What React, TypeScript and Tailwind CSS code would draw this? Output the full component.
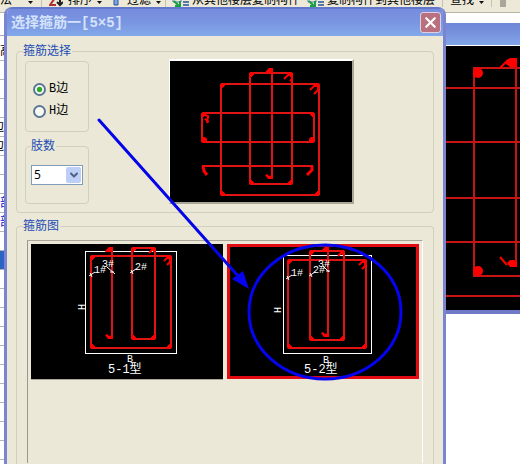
import { useState } from 'react';
import type { ReactNode } from 'react';
import { ChevronDown, X } from 'lucide-react';

interface GroupProps {
  title: string;
  className?: string;
  children: ReactNode;
}

interface BarLoop {
  x: number;
  y: number;
  w: number;
  h: number;
}

interface CardSpec {
  name: string;
  frame: BarLoop;
  outer: BarLoop;
  inner: BarLoop;
  tie: { x: number; y1: number; y2: number };
  marks: { text: string; x: number; y: number }[];
  leaders: string;
  side: { x: number; y: number };
  bottom: { x: number; y: number };
}

const cards: CardSpec[] = [
  {
    name: '5-1型',
    frame: { x: 54, y: 7, w: 91, h: 102 },
    outer: { x: 60, y: 12, w: 80, h: 92 },
    inner: { x: 101, y: 4, w: 23, h: 91 },
    tie: { x: 81, y1: 4, y2: 94 },
    marks: [
      { text: '1#', x: 63, y: 29 },
      { text: '3#', x: 71, y: 23 },
      { text: '2#', x: 104, y: 26 },
    ],
    leaders: 'M58 32l6-4M59 29l2 4M76 23l8 7M79 28h4M99 29l6-4M100 26l2 4',
    side: { x: 54, y: 63 },
    bottom: { x: 99, y: 118 },
  },
  {
    name: '5-2型',
    frame: { x: 56, y: 11, w: 88, h: 98 },
    outer: { x: 61, y: 16, w: 78, h: 88 },
    inner: { x: 83, y: 7, w: 34, h: 89 },
    tie: { x: 101, y1: 4, y2: 92 },
    marks: [
      { text: '1#', x: 64, y: 32 },
      { text: '2#', x: 86, y: 29 },
      { text: '3#', x: 91, y: 23 },
    ],
    leaders: 'M59 35l6-4M60 32l2 4M82 32l6-4M83 29l2 4M96 22l6 6M99 27h4',
    side: { x: 54, y: 66 },
    bottom: { x: 99, y: 119 },
  },
];

const sheetRows = ['高', '', '', '', '边', '边', '', '', '部', '部', '', 'selected', '', '', '', '', '', '', '', '', '', ''];

function Group({ title, className = '', children }: GroupProps) {
  return (
    <fieldset className={`min-w-0 border border-[#d0d0bc] ${className}`}>
      <legend className="pr-px text-[12px] leading-[14px] text-[#1c4cb4]">{title}</legend>
      {children}
    </fieldset>
  );
}

// Closed stirrup with thickened bends in its corners
function Stirrup({ x, y, w, h }: BarLoop) {
  const r = x + w;
  const b = y + h;
  return (
    <g>
      <rect x={x} y={y} width={w} height={h} rx={1} fill="none" stroke="#e01414" strokeWidth={2} />
      <path
        d={`M${x} ${y}h5l-5 5zM${r} ${y}v5l-5-5zM${x} ${b}v-5l5 5zM${r} ${b}h-5l5-5z`}
        fill="#ff0000"
        stroke="#ff0000"
      />
    </g>
  );
}

function TieBar({ x, y1, y2 }: { x: number; y1: number; y2: number }) {
  return (
    <g>
      <path d={`M${x} ${y1}V${y2}`} stroke="#e01414" strokeWidth={2} />
      <path
        d={`M${x + 1} ${y1 - 1}v5h-8l1-2l3-3zM${x + 1} ${y2 + 1}h-5l-3-4l2 -1l2 2l4-1z`}
        fill="#ff0000"
      />
    </g>
  );
}

function SectionPreview() {
  return (
    <svg viewBox="0 0 182 142" className="block h-[142px] w-full" fill="none" role="img" aria-label="箍筋">
      <Stirrup x={51} y={23} w={98} h={111} />
      <Stirrup x={80} y={12} w={42} h={111} />
      <rect x={32} y={52} width={112} height={29} rx={2} stroke="#e01414" strokeWidth={2} />
      <path
        d="M32 52h5l-5 5zM144 52v5l-5-5z"
        fill="#ff0000"
        stroke="#ff0000"
      />
      <circle cx={34} cy={79} r={3} fill="#ff0000" />
      <circle cx={142} cy={79} r={3} fill="#ff0000" />
      <TieBar x={102} y1={8} y2={117} />
      <path d="M32 105H143" stroke="#e01414" strokeWidth={2} />
      <path d="M33 105l1 5l3 4M142 105v4l-5 5" stroke="#ff0000" strokeWidth={3} />
      <path d="M140 29l4-4h4v4l-4 4M114 18l4-4h4v4l-2 2M35 58l4 3M35 54l3 1v2M38 55l-1 7" stroke="#ff0000" strokeWidth={2} />
    </svg>
  );
}

function StirrupCard({ card, selected, onSelect }: { card: CardSpec; selected: boolean; onSelect: () => void }) {
  const { outer, inner } = card;
  return (
    <button
      type="button"
      aria-pressed={selected}
      onClick={onSelect}
      className={`min-w-0 flex-1 bg-black ${
        selected ? 'ring-3 ring-inset ring-[#e30b12]' : 'shadow-[0_1px_0_#aaa799]'
      }`}
    >
      <svg viewBox="0 0 192 135" className="block h-[135px] w-full" fill="none">
        <rect x={card.frame.x + 0.5} y={card.frame.y + 0.5} width={card.frame.w} height={card.frame.h} stroke="#ffffff" />
        <Stirrup {...outer} />
        <Stirrup {...inner} />
        <TieBar {...card.tie} />
        <path
          d={`M${outer.x + outer.w - 7} ${outer.y + 5}l3-3h3v4l-3 3M${inner.x + inner.w - 6} ${inner.y + 5}l3-3h3`}
          stroke="#ff0000"
          strokeWidth={2}
        />
        <path d={card.leaders} stroke="#ffffff" />
        <g fill="#ffffff" className="font-['Liberation_Mono','Noto_Sans_CJK_SC',monospace]">
          {card.marks.map((mark) => (
            <text key={mark.text} x={mark.x} y={mark.y} fontSize={10}>
              {mark.text}
            </text>
          ))}
          <text transform={`translate(${card.side.x} ${card.side.y}) rotate(-90)`} fontSize={10} textAnchor="middle">
            H
          </text>
          <text x={card.bottom.x} y={card.bottom.y} fontSize={10} textAnchor="middle">
            B
          </text>
          <text x={77} y={129} fontSize={12}>
            {card.name}
          </text>
        </g>
      </svg>
    </button>
  );
}

function CopyIcon() {
  return (
    <svg viewBox="0 0 17 12" className="h-3 w-[17px] shrink-0" fill="none">
      <path d="M1 1h8v6H1zM9 4h3" stroke="#4a78b0" />
      <path d="M2 6l5 5M3 11h5V6" stroke="#18a040" strokeWidth={2} />
      <path d="M11 4h6M11 7h6M11 10h6" stroke="#5878a8" strokeWidth={2} />
    </svg>
  );
}

function Caret() {
  return (
    <svg viewBox="0 0 5 12" className="h-3 w-[5px] shrink-0">
      <path d="M0 6h5l-2.5 3z" fill="#111111" />
    </svg>
  );
}

function Toolbar() {
  return (
    <div className="flex h-[13px] items-end overflow-hidden border-b border-[#b8b5a4] bg-[#ece9d8] pb-[5px] text-[12px] leading-[14px] whitespace-nowrap text-black">
      <div className="flex w-[42px] shrink-0 items-end justify-between border-r border-[#c5c2b2] pr-2">
        <button type="button">法</button>
        <Caret />
      </div>
      <button type="button" className="ml-[7px] flex items-end gap-[5px]">
        <svg viewBox="0 0 14 12" className="h-3 w-[14px]" fill="none">
          <path d="M0 3h6L1 10h6" stroke="#b03030" strokeWidth={2} />
          <path d="M11 0v9M8 7l3 3l3-3" stroke="#222222" strokeWidth={2} />
        </svg>
        排序
        <Caret />
      </button>
      <button type="button" className="ml-[11px] flex items-end gap-[5px]">
        <svg viewBox="0 0 8 12" className="mr-px h-3 w-2">
          <path d="M1 0h4v10H1z" fill="#79a5e0" stroke="#31549c" />
        </svg>
        过滤
        <Caret />
      </button>
      <span className="ml-1 h-3 border-r border-[#c5c2b2]" />
      <button type="button" className="ml-[6px] flex items-end gap-[3px]">
        <CopyIcon />
        从其他楼层复制构件
      </button>
      <button type="button" className="ml-[7px] flex items-end gap-[3px]">
        <CopyIcon />
        复制构件到其他楼层
      </button>
      <span className="ml-[7px] h-3 border-r border-[#c5c2b2]" />
      <button type="button" className="ml-[7px] flex items-end gap-[5px]">
        查找
        <Caret />
      </button>
      <span className="ml-[7px] h-3 border-r border-[#c5c2b2]" />
      <span className="ml-[8px] h-2 w-[6px] shrink-0 bg-[#aaa79a]" />
    </div>
  );
}

function SheetStrip() {
  return (
    <div className="mt-[22px] w-4 border-t border-[#a8a8a8] pt-[6px]">
      {sheetRows.map((row, index) => (
        <div
          key={index}
          className={`flex h-[19px] w-4 items-center overflow-hidden border-b border-[#b4b4b4] text-[12px] ${
            row === 'selected' ? 'bg-[#2b62c4]' : ''
          } ${row === '部' ? 'text-[#1010d0]' : 'text-black'}`}
        >
          <span className={row === '边' ? '-ml-2' : ''}>{row === 'selected' ? '' : row}</span>
        </div>
      ))}
    </div>
  );
}

function SectionWindow() {
  return (
    <section className="absolute top-[23px] right-0 left-[240px] border-b-4 border-[#7079c8] bg-black">
      <div className="h-[23px] border-b border-white bg-linear-to-b from-[#6f87d8] via-[#7893de] to-[#82a7e8]" />
      <svg viewBox="0 0 74 264" className="ml-auto block h-[264px] w-[74px]" fill="none">
        <path
          d="M0 42H74M0 96H74M0 152H74M0 196H74M0 250H74M74 22H28V230H74M70 15V221"
          stroke="#c81414"
          strokeWidth={2}
        />
        <path d="M54 22l8-8M54 211l7 8" stroke="#ff0000" strokeWidth={2} />
        <path d="M61 14l3-2h7v9h-7l-4-3zM61 217l3-3h4l3 2v5h-7z" fill="#ff0000" />
        <circle cx={32} cy={27} r={5} fill="#ff0000" />
        <circle cx={32} cy={225} r={5} fill="#ff0000" />
      </svg>
    </section>
  );
}

function StirrupDialog() {
  const [side, setSide] = useState('B');
  const [legs, setLegs] = useState('5');
  const [selected, setSelected] = useState('5-2型');

  return (
    <section
      role="dialog"
      aria-labelledby="dialog-title"
      className="absolute top-[7px] right-[74px] bottom-0 left-1 flex flex-col overflow-hidden rounded-t-lg border-x-3 border-[#7b84d0] bg-[#ebe8d8]"
    >
      <header className="flex h-[29px] shrink-0 items-center justify-between border-t-2 border-[#6277cb] bg-linear-to-b from-[#768cdd] via-[#7995e0] to-[#83a9ea] pr-[2px] pl-1">
        <h1 id="dialog-title" className="font-['Liberation_Mono','Noto_Sans_CJK_SC',monospace] text-[14px] leading-4 font-bold text-[#d5e2fb]">
          选择箍筋一[5×5]
        </h1>
        <button
          type="button"
          aria-label="关闭"
          className="flex size-[21px] items-center justify-center rounded-[3px] border border-[#e0cfe4] bg-[#b9717f] text-white"
        >
          <X size={17} strokeWidth={3} />
        </button>
      </header>

      <div className="flex flex-1 flex-col gap-[6px] px-[9px] pt-2">
        <Group title="箍筋选择" className="flex shrink-0 rounded-[4px] px-[6px] pb-2">
          <div className="flex gap-20 pt-px pl-[2px]">
            <div className="flex w-16 shrink-0 flex-col gap-[7px] pt-[2px]">
              <div
                role="radiogroup"
                aria-label="边"
                className="flex h-[71px] flex-col gap-2 rounded-[4px] border border-[#d0d0bc] pt-5 pl-[7px] font-['Liberation_Mono','Noto_Sans_CJK_SC',monospace] text-[12px] leading-[14px] text-black"
              >
                {['B', 'H'].map((value) => (
                  <label key={value} className="flex items-center gap-[3px]">
                    <input
                      type="radio"
                      name="side"
                      value={value}
                      checked={side === value}
                      onChange={() => setSide(value)}
                      className="size-[13px] appearance-none rounded-full border-2 border-[#5a7796] bg-[#f8f8f4] checked:bg-radial checked:from-[#2faa2f] checked:from-35% checked:to-[#f8f8f4] checked:to-50%"
                    />
                    {value}边
                  </label>
                ))}
              </div>
              <Group title="肢数" className="h-[65px] rounded-[4px] px-[5px]">
                <div className="relative mt-3 h-5 border border-[#7f9db9] bg-white">
                  <select
                    aria-label="肢数"
                    value={legs}
                    onChange={(event) => setLegs(event.target.value)}
                    className="block h-[18px] w-full appearance-none pl-[2px] font-['Noto_Sans',sans-serif] text-[12px] leading-[18px] text-black"
                  >
                    <option>3</option>
                    <option>4</option>
                    <option>5</option>
                    <option>6</option>
                  </select>
                  <span className="pointer-events-none absolute inset-y-px right-px flex w-[15px] items-center justify-center rounded-[2px] bg-[#bdcff6]">
                    <ChevronDown size={12} strokeWidth={4} className="text-[#4d6185]" />
                  </span>
                </div>
              </Group>
            </div>
            <div className="h-[145px] w-[185px] shrink-0 border-t-2 border-r-2 border-b-2 border-l border-t-white border-r-[#aaa799] border-b-[#aaa799] border-l-white bg-black">
              <SectionPreview />
            </div>
          </div>
        </Group>

        <Group title="箍筋图" className="flex flex-1 flex-col rounded-t-[4px] border-b-0 px-[6px]">
          <div className="mx-1 mt-[7px] min-h-[223px] border-t border-r border-l border-t-[#aaa799] border-r-white border-l-[#9a988c] p-[3px]">
            <div className="flex gap-1">
              {cards.map((card) => (
                <StirrupCard
                  key={card.name}
                  card={card}
                  selected={selected === card.name}
                  onSelect={() => setSelected(card.name)}
                />
              ))}
            </div>
          </div>
        </Group>
      </div>
    </section>
  );
}

// Pointer and ring drawn by hand over the dialog
function Annotation() {
  return (
    <svg viewBox="0 0 520 464" className="pointer-events-none absolute top-0 left-0 h-[464px] w-[520px]" fill="none">
      <path d="M99 120L239 277" stroke="#0404e8" strokeWidth={3} strokeLinecap="round" />
      <path d="M249 289l-17-10l11-8z" fill="#0404f0" />
      <ellipse cx={325} cy={312} rx={76} ry={67} stroke="#0404f0" strokeWidth={3} />
    </svg>
  );
}

export default function App() {
  return (
    <main className="relative h-screen overflow-hidden bg-white font-['Liberation_Sans','Noto_Sans_CJK_SC',sans-serif]">
      <Toolbar />
      <SheetStrip />
      <SectionWindow />
      <StirrupDialog />
      <Annotation />
    </main>
  );
}
